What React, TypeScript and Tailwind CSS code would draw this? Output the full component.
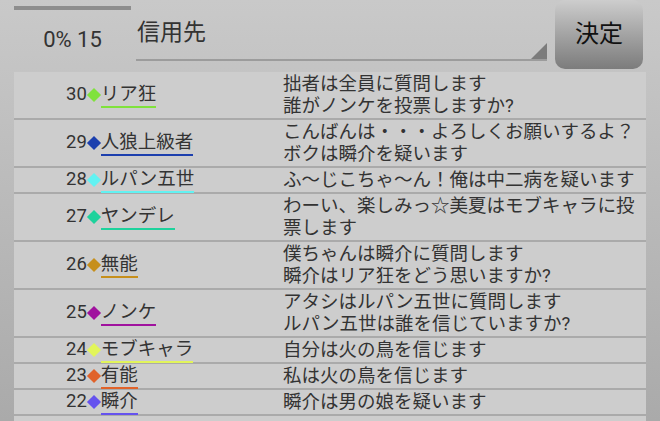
import React from 'react';

type Entry = {
  no: number;
  name: string;
  color: string;
  lines: string[];
};

const ENTRIES: Entry[] = [
  { no: 30, name: 'リア狂', color: '#80e23c', lines: ['拙者は全員に質問します', '誰がノンケを投票しますか?'] },
  { no: 29, name: '人狼上級者', color: '#1c3fae', lines: ['こんばんは・・・よろしくお願いするよ？', 'ボクは瞬介を疑います'] },
  { no: 28, name: 'ルパン五世', color: '#62f2f2', lines: ['ふ〜じこちゃ〜ん！俺は中二病を疑います'] },
  { no: 27, name: 'ヤンデレ', color: '#1ed29c', lines: ['わーい、楽しみっ☆美夏はモブキャラに投', '票します'] },
  { no: 26, name: '無能', color: '#c68f1c', lines: ['僕ちゃんは瞬介に質問します', '瞬介はリア狂をどう思いますか?'] },
  { no: 25, name: 'ノンケ', color: '#a0129e', lines: ['アタシはルパン五世に質問します', 'ルパン五世は誰を信じていますか?'] },
  { no: 24, name: 'モブキャラ', color: '#e2f55a', lines: ['自分は火の鳥を信じます'] },
  { no: 23, name: '有能', color: '#e0622a', lines: ['私は火の鳥を信じます'] },
  { no: 22, name: '瞬介', color: '#6552ee', lines: ['瞬介は男の娘を疑います'] },
];

function Row({ entry }: { entry: Entry }) {
  const tall = entry.lines.length > 1;
  return (
    <div className={`flex border-b-2 border-[#aaaaaa] ${tall ? 'h-[48px]' : 'h-[26px]'}`}>
      <div className="w-[269px] shrink-0 pl-[52px] flex items-center">
        <div className="flex items-baseline">
          <span className="leading-[22px]">{entry.no}</span>
          <span className="w-[14px] self-center flex items-center justify-center">
            <span className="w-[10px] h-[10px] rotate-45" style={{ backgroundColor: entry.color }} />
          </span>
          <span className="leading-[23px] border-b-2" style={{ borderColor: entry.color }}>
            {entry.name}
          </span>
        </div>
      </div>
      <div className="flex-1 flex flex-col justify-center">
        {entry.lines.map((line, i) => (
          <div key={i} className="leading-[22px] whitespace-nowrap">{line}</div>
        ))}
      </div>
    </div>
  );
}

export default function App() {
  return (
    <div className="w-[660px] h-[421px] overflow-hidden flex flex-col bg-gradient-to-b from-[#c9c9c9] to-[#aaaaaa] text-[#333] font-['Roboto','Noto_Sans_CJK_JP',sans-serif]">
      {/* header */}
      <div className="h-[72px] shrink-0 flex">
        <div className="ml-[14px] w-[117px] flex flex-col">
          <div className="mt-[6px] h-[4px] bg-[#8e8e8e]" />
          <div className="flex-1 flex items-center justify-center pb-[4px] text-[22px] text-[#333]">0% 15</div>
        </div>
        <div className="ml-[5px] w-[411px] h-[61px] relative border-b-2 border-[#9c9c9c]">
          <div className="pl-[1px] pt-[18px] text-[23px] leading-[30px] text-[#333]">信用先</div>
          <svg className="absolute right-0 bottom-0" width="16" height="16" viewBox="0 0 16 16">
            <polygon points="16,0 16,16 0,16" fill="#7c7c7c" />
          </svg>
        </div>
        <button className="ml-[8px] w-[88px] h-[69px] pb-[1px] rounded-[10px] bg-gradient-to-b from-[#cdcdcd] to-[#7c7c7c] text-[24px] text-[#111] flex items-center justify-center">
          決定
        </button>
      </div>

      {/* list */}
      <div className="mx-[14px] flex-1 bg-[#cdcdcd] text-[18.5px]">
        {ENTRIES.map((e) => (
          <Row key={e.no} entry={e} />
        ))}
      </div>
    </div>
  );
}
